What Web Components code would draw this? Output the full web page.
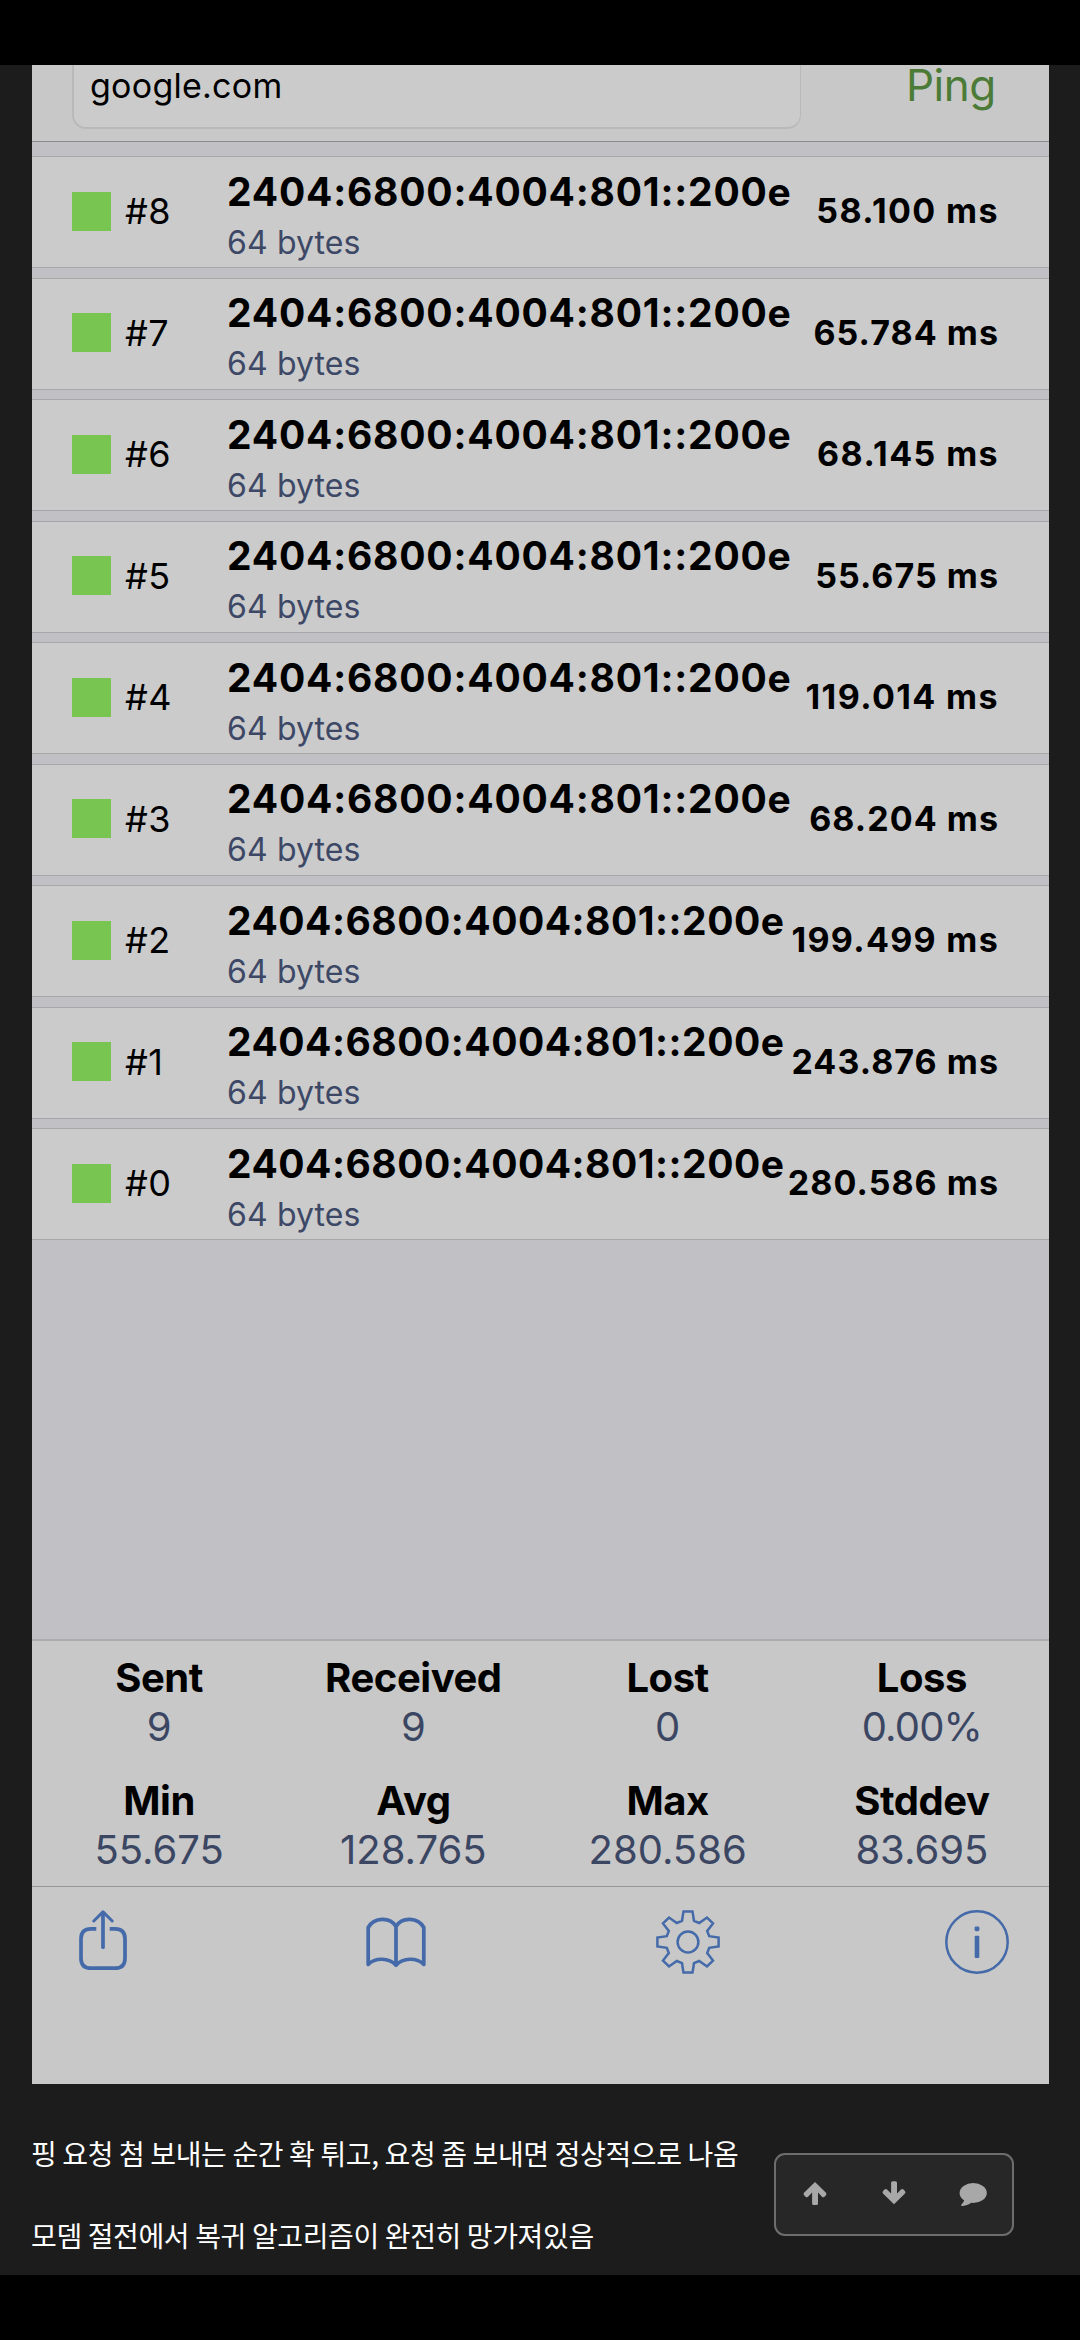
<!DOCTYPE html>
<html lang="ko">
<head>
<meta charset="utf-8">
<title>Ping</title>
<style>
html,body{margin:0;background:#000}
body{width:1080px;height:2340px;overflow:hidden;font-family:Inter,"Noto Sans CJK KR",sans-serif;color:#000}
</style>
</head>
<body>
<post-page>
  <ping-screen>
    <address-bar slot="top" host="google.com">Ping</address-bar>
    <ping-row seq="#8" size="64 bytes" time="58.100 ms" style="--time-spacing:1.4px">2404:6800:4004:801::200e</ping-row>
    <ping-row seq="#7" size="64 bytes" time="65.784 ms">2404:6800:4004:801::200e</ping-row>
    <ping-row seq="#6" size="64 bytes" time="68.145 ms" style="--time-spacing:1.4px">2404:6800:4004:801::200e</ping-row>
    <ping-row seq="#5" size="64 bytes" time="55.675 ms">2404:6800:4004:801::200e</ping-row>
    <ping-row seq="#4" size="64 bytes" time="119.014 ms" style="--time-spacing:1.4px">2404:6800:4004:801::200e</ping-row>
    <ping-row seq="#3" size="64 bytes" time="68.204 ms">2404:6800:4004:801::200e</ping-row>
    <ping-row tight seq="#2" size="64 bytes" time="199.499 ms" style="--time-spacing:1.3px">2404:6800:4004:801::200e</ping-row>
    <ping-row tight seq="#1" size="64 bytes" time="243.876 ms">2404:6800:4004:801::200e</ping-row>
    <ping-row tight seq="#0" size="64 bytes" time="280.586 ms">2404:6800:4004:801::200e</ping-row>
    <stat-grid slot="bottom">
      <stat-cell label="Sent">9</stat-cell>
      <stat-cell label="Received">9</stat-cell>
      <stat-cell label="Lost">0</stat-cell>
      <stat-cell label="Loss" style="--value-spacing:-.8px">0.00%</stat-cell>
      <stat-cell label="Min">55.675</stat-cell>
      <stat-cell label="Avg">128.765</stat-cell>
      <stat-cell label="Max">280.586</stat-cell>
      <stat-cell label="Stddev">83.695</stat-cell>
    </stat-grid>
    <tool-bar slot="bottom"></tool-bar>
  </ping-screen>
  <post-text slot="text">핑 요청 첨 보내는 순간 확 튀고, 요청 좀 보내면 정상적으로 나옴</post-text>
  <post-text slot="text">모뎀 절전에서 복귀 알고리즘이 완전히 망가져있음</post-text>
  <vote-box slot="float"></vote-box>
</post-page>
<script>
const define = (name, html) => customElements.define(name, class extends HTMLElement {
  connectedCallback() {
    if (this.shadowRoot) return;
    const root = this.attachShadow({ mode: 'open' });
    const tpl = document.createElement('template');
    tpl.innerHTML = html;
    root.append(tpl.content.cloneNode(true));
    root.querySelectorAll('[data-attr]').forEach(el => {
      el.textContent = this.getAttribute(el.dataset.attr) || '';
    });
  }
});

define('post-page', `
<style>
:host{display:block;padding-top:65px}
.page{position:relative;height:2210px;background:#1c1c1c;display:flex;flex-direction:column}
.text{padding:29px 0 0 31px}
</style>
<div class="page"><slot></slot><div class="text"><slot name="text"></slot></div><slot name="float"></slot></div>`);

define('ping-screen', `
<style>
:host{display:flex;flex-direction:column;box-sizing:border-box;width:1017px;height:2019px;margin-left:32px;background:#c0c0c5;flex:none}
.list{flex:1;display:flex;flex-direction:column;gap:9.5px;padding-top:14px}
</style>
<slot name="top"></slot><div class="list"><slot></slot></div><slot name="bottom"></slot>`);

define('address-bar', `
<style>
:host{display:flex;align-items:flex-end;box-sizing:border-box;height:77px;background:#c8c8c8;border-bottom:1px solid #8b8b8f;padding-left:40px}
.field{box-sizing:border-box;width:729px;height:64px;flex:none;border:2px solid #b9b9b9;border-width:0 1px 2px 2px;border-radius:0 0 14px 14px;background:#cbcbcb;margin-bottom:12px;padding:0 0 21px 16px;display:flex;align-items:flex-end;font-size:34px;line-height:40px;letter-spacing:.25px}
.go{margin:0 0 36px 105px;font-size:44px;line-height:40px;letter-spacing:-.5px;color:#4b7b36}
</style>
<div class="field"><span data-attr="host"></span></div><div class="go"><slot></slot></div>`);

define('ping-row', `
<style>
:host{display:flex;align-items:center;box-sizing:border-box;height:112px;flex:none;padding:0 50px 2px 40px;background:#cbcbcb;border:solid #a7a7a9;border-width:1px 0;--ls:.79px}
:host([tight]){--ls:.49px}
.dot{width:39px;height:39px;background:#79c551}
.seq{width:102px;margin-left:14px;font-size:36px;line-height:44px;letter-spacing:.5px}
.info{align-self:flex-start;padding-top:9.5px;flex:1;min-width:0;white-space:nowrap}
.addr{font-size:39px;line-height:50px;font-weight:700;letter-spacing:var(--ls)}
.size{margin-top:7px;font-size:32px;line-height:38px;color:#3d4866;letter-spacing:.12px}
.time{font-size:34px;line-height:42px;font-weight:700;letter-spacing:var(--time-spacing,1.05px);white-space:nowrap}
</style>
<div class="dot"></div><div class="seq" data-attr="seq"></div>
<div class="info"><div class="addr"><slot></slot></div><div class="size" data-attr="size"></div></div>
<div class="time" data-attr="time"></div>`);

define('stat-grid', `
<style>
:host{display:grid;grid-template-columns:repeat(4,1fr);row-gap:24.5px;align-content:start;box-sizing:border-box;height:247px;flex:none;padding-top:12px;background:#c8c8c8;border-top:2px solid #acacae}
</style><slot></slot>`);

define('stat-cell', `
<style>
:host{display:flex;flex-direction:column;align-items:center;font-size:40px;line-height:49px}
.label{font-weight:700;letter-spacing:-.45px}
.value{color:#3b4663;letter-spacing:var(--value-spacing,0)}
</style>
<div class="label" data-attr="label"></div><div class="value"><slot></slot></div>`);

define('tool-bar', `
<style>
:host{display:flex;gap:228.6px;box-sizing:border-box;height:198px;flex:none;padding:23px 0 0 39px;background:#c8c8c8;border-top:1px solid #979798}
svg{display:block;flex:none;width:64px;height:64px;fill:none;stroke:#456aa9;stroke-width:3.7;stroke-linecap:round;stroke-linejoin:round}
svg:last-child{margin-left:-4px}
</style>
<svg viewBox="0 0 64 64"><path stroke-linecap="butt" d="M25.3 18.8H20Q10 18.8 10 28.8V48.2Q10 58.2 20 58.2H44Q54 58.2 54 48.2V28.8Q54 18.8 44 18.8H38.7"/><path d="M32 37.2V3"/><path stroke-width="3" d="M22.8 11L32 1.9L41.2 11"/></svg>
<svg viewBox="0 0 64 64"><path d="M4.2 54.4V17.5C10 7.3 26 6.6 32 16.5C38 6.6 54 7.3 59.8 17.5V54.4C53 47.4 39 47.4 32 55.2C25 47.4 11 47.4 4.2 54.4ZM32 16.5V55.2"/></svg>
<svg viewBox="-32 -32 64 64"><g stroke-width="2.5" stroke-linejoin="miter"><circle r="10.4"/><path d="M-4.5-30.6H4.5L6-21.2L11.2-19L19-24.5L25-18.6L19.2-11L21.2-5.8L30.6-4.5V4.5L21.2 5.8L19.2 11L25 18.6L19 24.5L11.2 19L6 21.2L4.5 30.6H-4.5L-6 21.2L-11.2 19L-19 24.5L-25 18.6L-19.2 11L-21.2 5.8L-30.6 4.5V-4.5L-21.2-5.8L-19.2-11L-25-18.6L-19-24.5L-11.2-19L-6-21.2Z"/></g></svg>
<svg viewBox="-32 -32 64 64"><circle r="30.7" stroke-width="2.5"/><g fill="#456aa9" stroke="none"><rect x="-2.4" y="-15.4" width="4.8" height="4.6" rx="1.4"/><rect x="-2.3" y="-6.3" width="4.6" height="22.3" rx="1"/></g></svg>`);

define('post-text', `
<style>
:host{display:block;font:400 28px/81.5px "Noto Sans CJK KR",sans-serif;color:#fff;letter-spacing:-.37px;word-spacing:-1.55px;white-space:nowrap}
</style><slot></slot>`);

define('vote-box', `
<style>
:host{position:absolute;left:774px;top:2088px;box-sizing:border-box;width:240px;height:83px;border:2px solid #6d6d6d;border-radius:11px;background:#272727;display:flex;justify-content:center;gap:51px;padding-top:24px}
svg{display:block;width:28px;height:28px;flex:none;fill:#a8a8a8}
</style>
<svg viewBox="0 0 28 28"><path d="M14 3L25 13.8Q26 15 24.9 16.2L23.5 17.7Q22.3 18.9 21 17.7L17 13.6V24.4Q17 25.9 15.5 25.9H12.6Q11.1 25.9 11.1 24.4V13.6L7 17.7Q5.7 18.9 4.5 17.7L3.1 16.2Q2 15 3 13.8Z"/></svg>
<svg viewBox="0 0 28 28"><path d="M14 25.2L25 14.4Q26 13.2 24.9 12L23.5 10.5Q22.3 9.3 21 10.5L17 14.6V3.8Q17 2.3 15.5 2.3H12.6Q11.1 2.3 11.1 3.8V14.6L7 10.5Q5.7 9.3 4.5 10.5L3.1 12Q2 13.2 3 14.4Z"/></svg>
<svg viewBox="0 0 28 28"><ellipse cx="14.2" cy="14" rx="13.6" ry="9.9"/><path d="M5.4 20C5.4 23 2.4 25 2.2 26.2C2.4 27.4 3.6 27.2 5 26.8C8 26 11 25 12.6 23.4Z"/></svg>`);
</script>
</body>
</html>
